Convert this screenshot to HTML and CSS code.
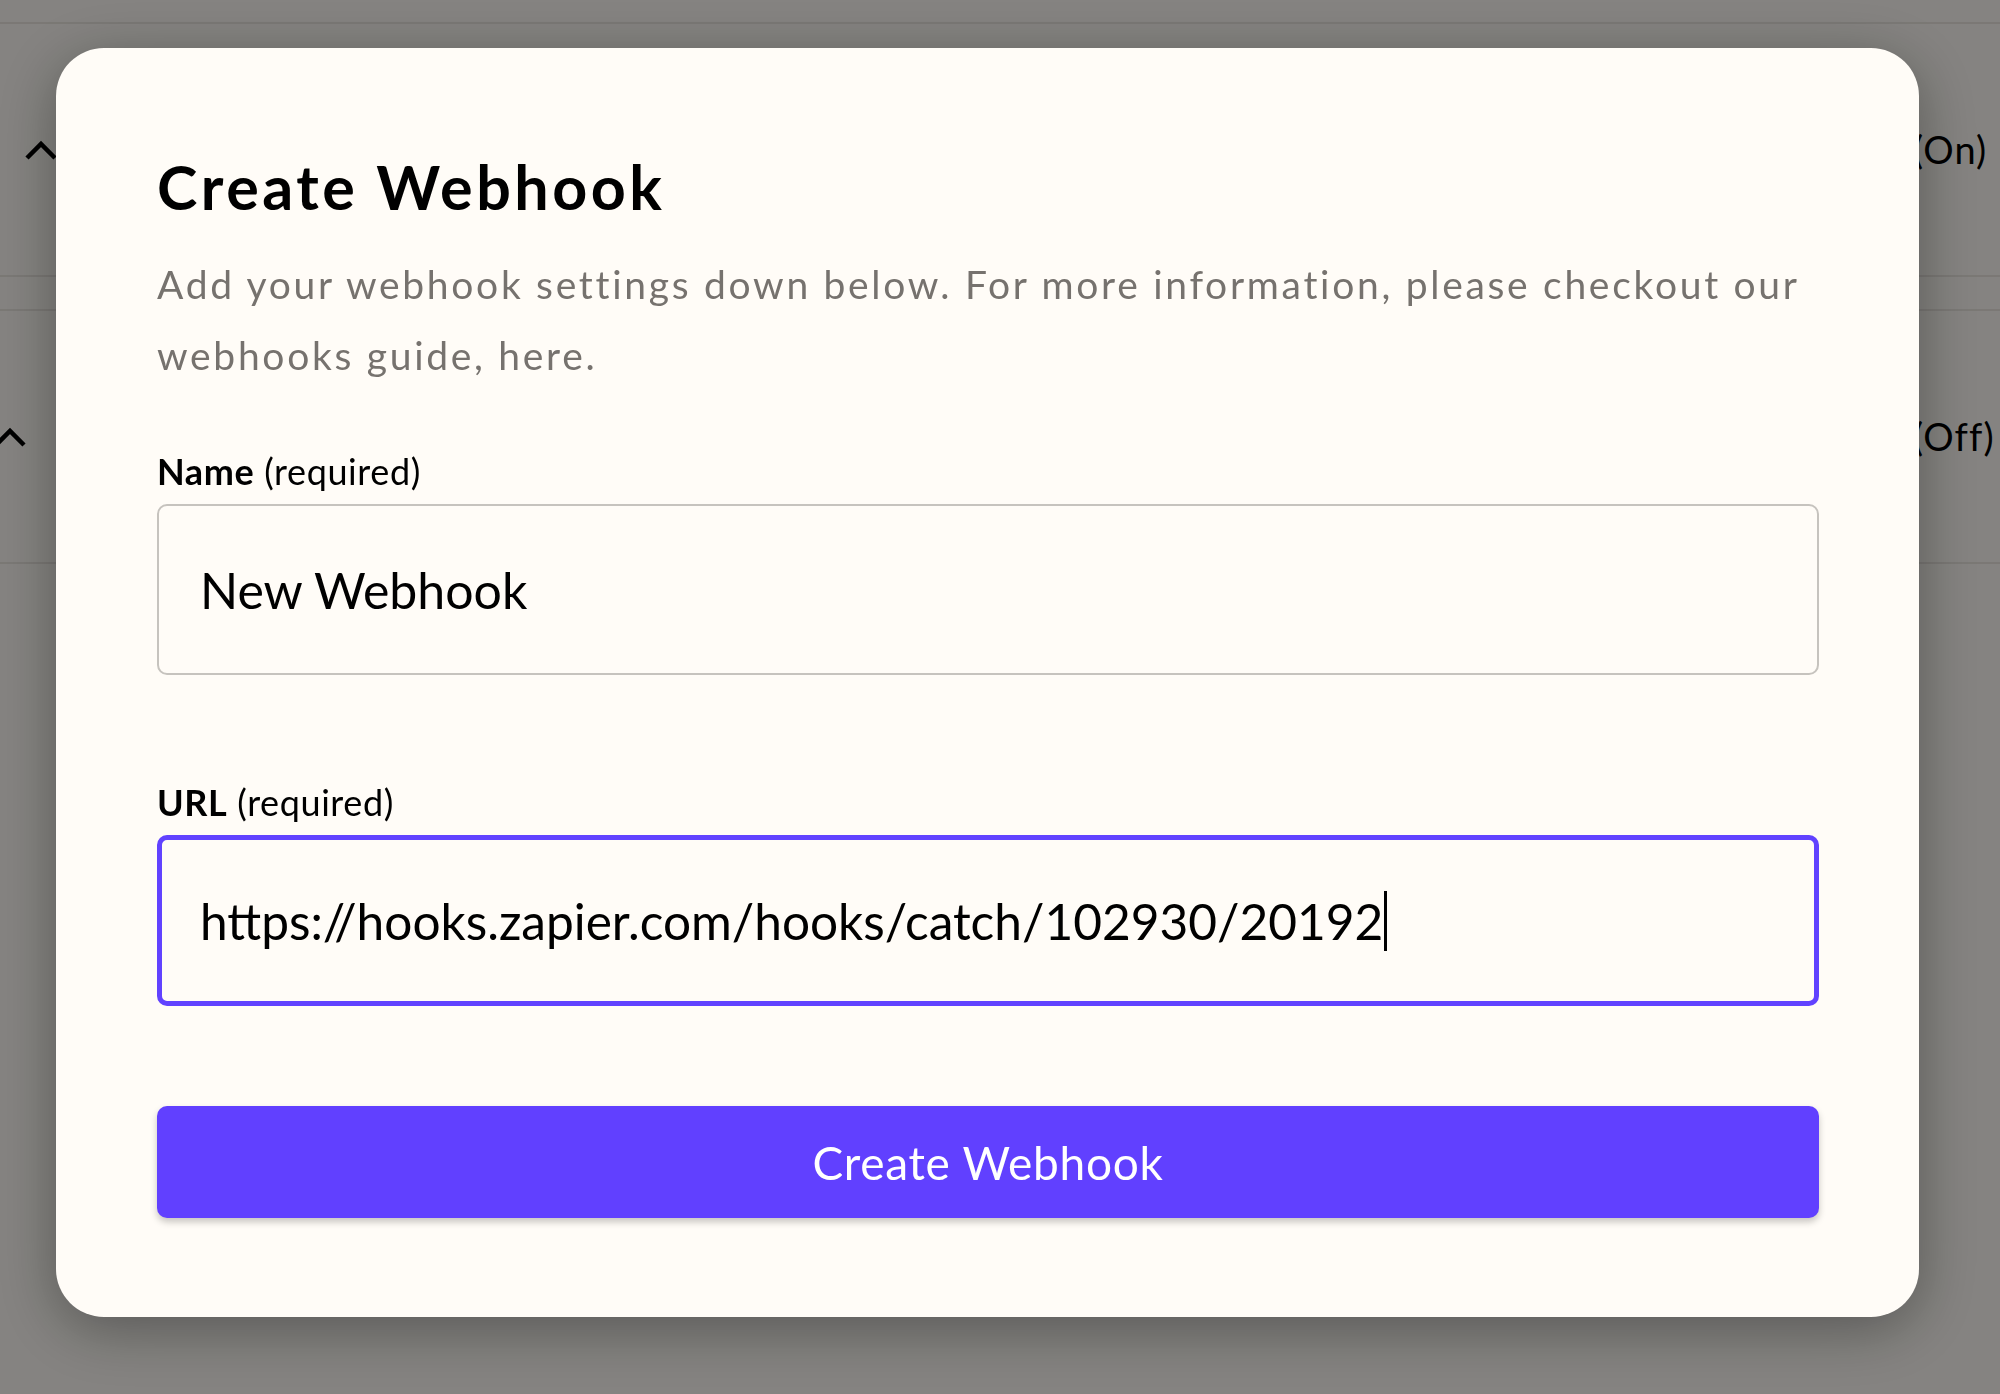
FILE: index.html
```html
<!DOCTYPE html>
<html lang="en">
<head>
<meta charset="utf-8">
<title>Create Webhook</title>
<link rel="stylesheet" href="styles.css">
</head>
<body>
<div class="page">
  <div class="page-row">
    <svg class="chev" width="32" height="20" viewBox="0 0 32 20"><polyline points="2,18 16,4 30,18"/></svg>
    <span class="status">(On)</span>
  </div>
  <div class="page-band"></div>
  <div class="page-row">
    <svg class="chev chev-nested" width="32" height="20" viewBox="0 0 32 20"><polyline points="2,18 16,4 30,18"/></svg>
    <span class="status">(Off)</span>
  </div>
  <div class="page-band"></div>
</div>

<div class="overlay">
  <div class="modal">
    <h1 class="modal-title">Create Webhook</h1>
    <p class="modal-desc">Add your webhook settings down below. For more information, please checkout our webhooks guide, here.</p>

    <div class="field">
      <div class="field-label"><b>Name</b> (required)</div>
      <div class="field-input">New Webhook</div>
    </div>

    <div class="field field-url">
      <div class="field-label"><b>URL</b> (required)</div>
      <div class="field-input is-focused">https://hooks.zapier.com/hooks/catch/102930/20192<span class="caret"></span></div>
    </div>

    <button class="submit" type="button">Create Webhook</button>
  </div>
</div>
</body>
</html>
```

FILE: styles.css
```css
* { box-sizing: border-box; }

html, body {
  margin: 0;
  padding: 0;
  width: 2000px;
  height: 1394px;
  overflow: hidden;
}

body {
  background: #fffcf7;
  font-family: Lato, "Liberation Sans", sans-serif;
  color: #000;
}

/* background page */
.page {
  padding-top: 22px;
  margin-right: -20px;
}

.page-row {
  height: 253px;
  border-top: 2px solid #ebe7e1;
  display: flex;
  align-items: center;
}

.page-band {
  height: 34px;
  border-top: 2px solid #ebe7e1;
}

.chev {
  margin-left: 25px;
  flex-shrink: 0;
}

.chev polyline {
  fill: none;
  stroke: #000;
  stroke-width: 4.5;
}

.chev-nested {
  margin-left: -6px;
}

.status {
  margin-left: auto;
  width: 107px;
  flex-shrink: 0;
  font-size: 38px;
  letter-spacing: 1px;
  padding-bottom: 2px;
}

/* overlay + modal */
.overlay {
  position: fixed;
  inset: 0;
  background: rgba(0, 0, 0, 0.48);
  display: flex;
  align-items: flex-start;
  padding: 48px 81px 0 56px;
}

.modal {
  flex: 1;
  background: #fffcf7;
  border-radius: 48px;
  padding: 102px 100px 99px 101px;
  box-shadow: 0 12px 60px rgba(0, 0, 0, 0.35);
}

.modal-title {
  margin: 0 0 26px;
  font-size: 61px;
  line-height: 73px;
  font-weight: 700;
  letter-spacing: 3.5px;
}

.modal-desc {
  margin: 0;
  font-size: 39px;
  line-height: 71px;
  letter-spacing: 2.7px;
  color: #76726e;
}

.field {
  margin-top: 58px;
}

.field-url {
  margin-top: 105px;
}

.field-label {
  font-size: 36px;
  line-height: 44px;
  letter-spacing: 0.6px;
  margin-bottom: 11px;
  color: #000;
}

.field-label b {
  font-weight: 700;
}

.field-input {
  height: 171px;
  border: 2px solid #c6c3be;
  border-radius: 10px;
  display: flex;
  align-items: center;
  padding-left: 41px;
  font-size: 50px;
  line-height: 60px;
  color: #000;
}

.field-input.is-focused {
  border: 5px solid #6142ff;
  padding-left: 38px;
  font-size: 49.6px;
}

.caret {
  display: inline-block;
  width: 3px;
  height: 60px;
  background: #000;
  margin-left: 1px;
}

.submit {
  display: block;
  width: 100%;
  height: 112px;
  margin-top: 100px;
  border: 0;
  border-radius: 10px;
  background: #6140ff;
  color: #fff;
  font-family: inherit;
  font-size: 46px;
  letter-spacing: 0.7px;
  box-shadow: 0 4px 7px rgba(0, 0, 0, 0.22);
}
```
